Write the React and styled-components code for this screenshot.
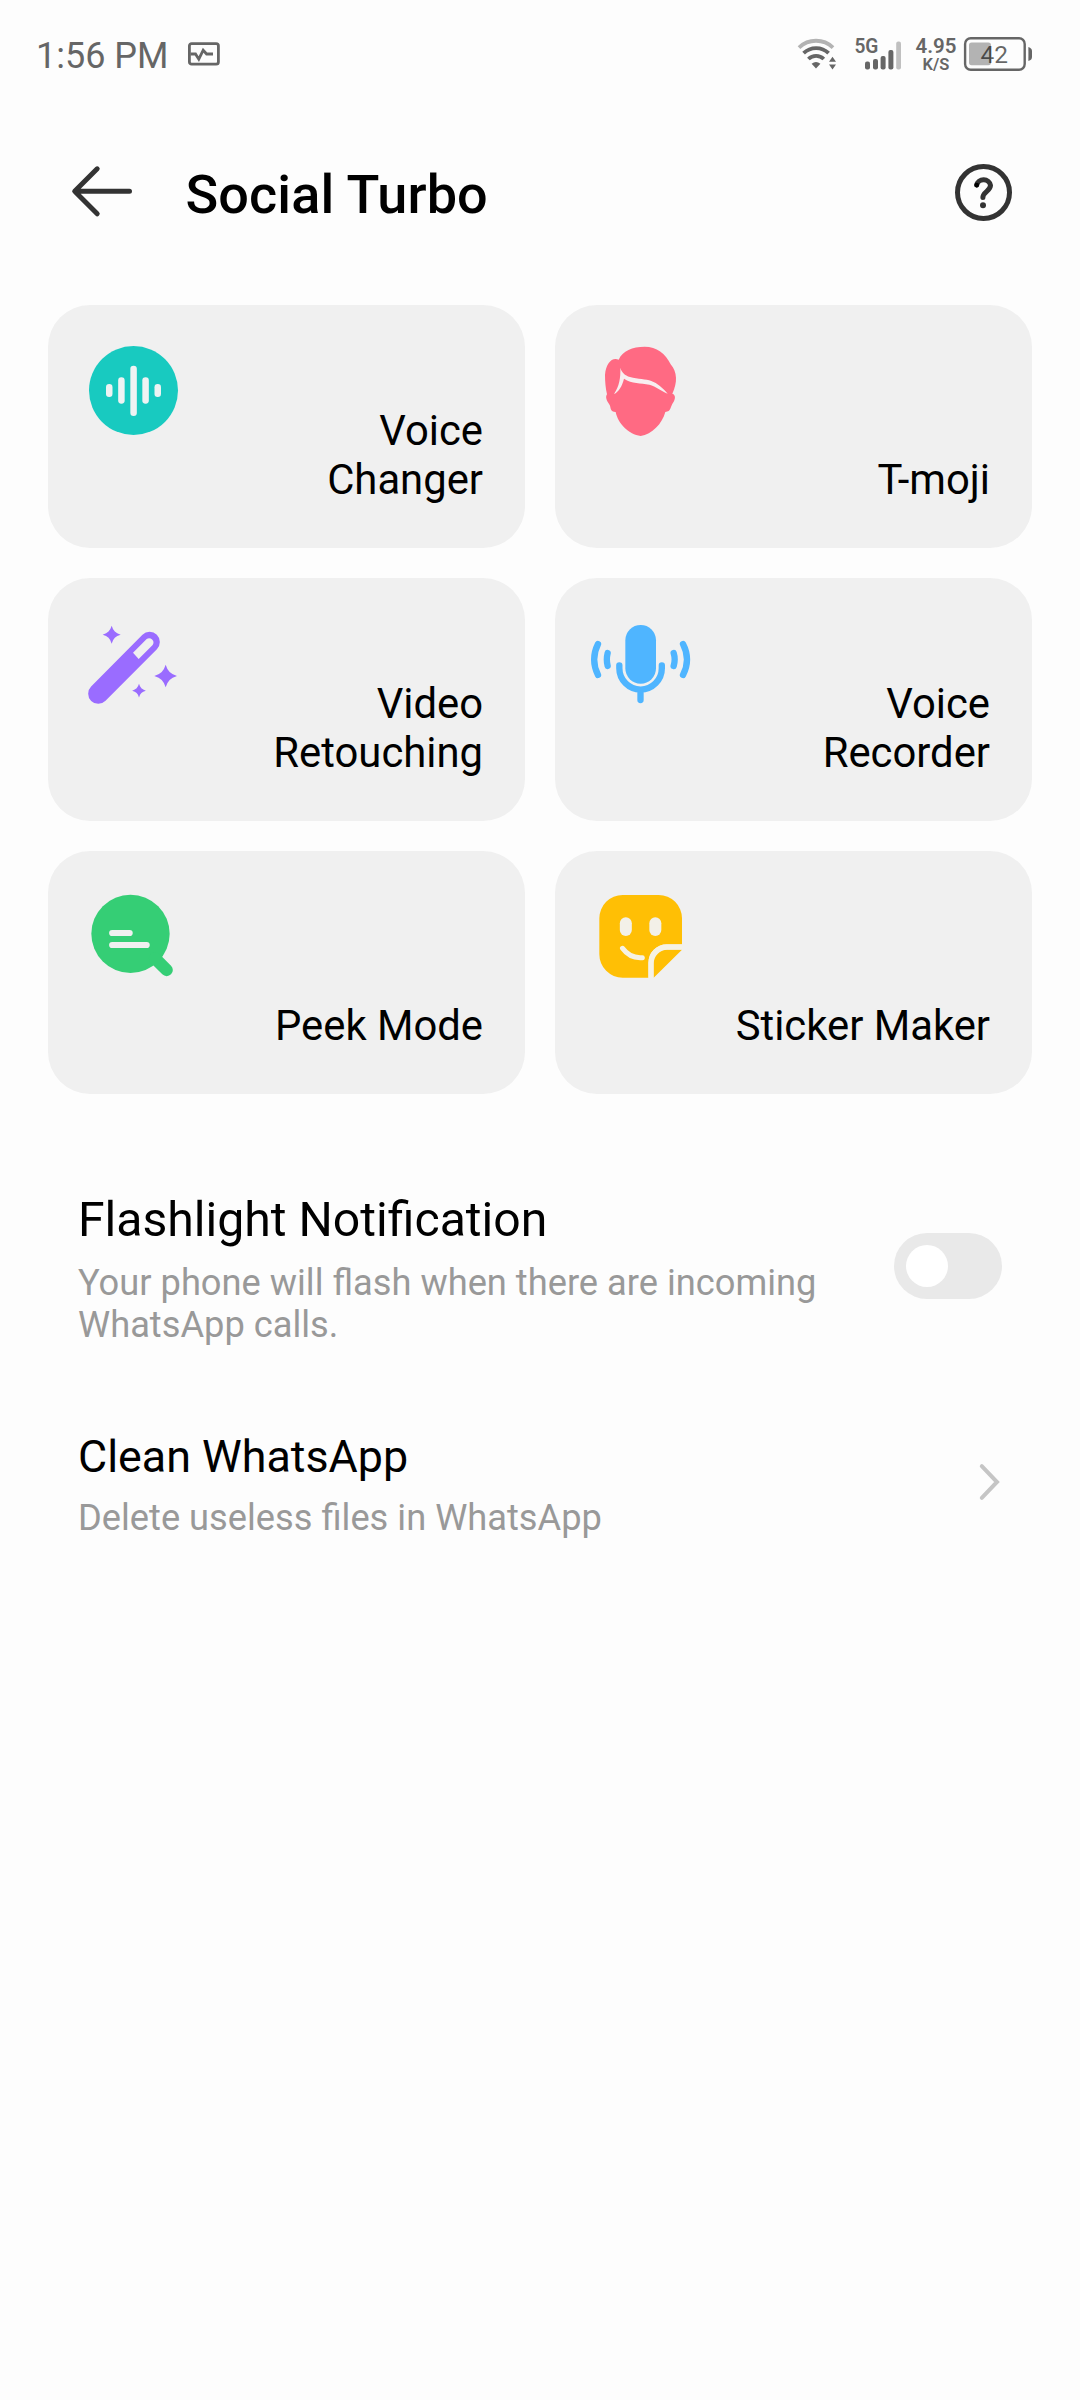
import React, { useState } from 'react';
import styled, { createGlobalStyle } from 'styled-components';

const GlobalStyle = createGlobalStyle`
  * {
    box-sizing: border-box;
  }
  body {
    margin: 0;
    background-color: #fdfdfd;
    font-family: Roboto, 'Noto Sans', sans-serif;
    color: #000;
  }
  button {
    padding: 0;
    border: 0;
    background: none;
    font: inherit;
    color: inherit;
  }
  svg {
    display: block;
    flex-shrink: 0;
  }
`;

const Screen = styled.div`
  width: 1080px;
  min-height: 2400px;
`;

const StatusBar = styled.div`
  display: flex;
  justify-content: space-between;
  height: 110px;
  padding: 34px 47px 0 36px;
  color: #666;
`;

const StatusGroup = styled.div`
  display: flex;
  align-items: flex-start;
`;

const Clock = styled.span`
  margin: 1px 18px 0 0;
  font-size: 36px;
  line-height: 42px;
`;

const MonitorSlot = styled.div`
  margin-top: 7px;
`;

const SignalSlot = styled.div`
  margin-left: 15px;
`;

const NetSpeed = styled.div`
  display: flex;
  flex-direction: column;
  align-items: center;
  width: 42px;
  margin: 2px 6px 0 12px;
  font-weight: 600;
`;

const SpeedValue = styled.span`
  font-size: 20.5px;
  line-height: 20px;
`;

const SpeedUnit = styled.span`
  font-size: 16.5px;
  line-height: 17px;
`;

const Header = styled.header`
  display: flex;
  align-items: center;
  height: 166px;
  padding: 0 66px 0 70px;
`;

const IconButton = styled.button`
  display: flex;
`;

const HelpButton = styled(IconButton)`
  margin-bottom: 2px;
`;

const Title = styled.h1`
  flex: 1;
  margin: 3px 0 0 47.5px;
  font-size: 54px;
  line-height: 64px;
  font-weight: 500;
  letter-spacing: 0.1px;
`;

const CardGrid = styled.div`
  display: grid;
  grid-template-columns: 477px 477px;
  grid-auto-rows: 243px;
  gap: 30px;
  padding: 29px 48px 0;
`;

const Card = styled.button`
  display: flex;
  justify-content: space-between;
  padding: 32px 42px 44px 32px;
  border-radius: 42px;
  background-color: #f0f0f0;
`;

const CardLabel = styled.span`
  align-self: flex-end;
  max-width: 256px;
  font-size: 41.8px;
  line-height: 49px;
  text-align: right;
`;

const SettingList = styled.div`
  display: flex;
  flex-direction: column;
  gap: 85px;
  padding: 98px 78px 0;
`;

const SettingRow = styled.div`
  display: flex;
  justify-content: space-between;
  align-items: flex-start;
`;

const SettingText = styled.div`
  max-width: 760px;
`;

const SettingTitle = styled.div`
  font-size: ${(props) => (props.$large ? '48.15px' : '44.8px')};
  line-height: ${(props) => (props.$large ? '56px' : '52px')};
`;

const SettingHint = styled.div`
  margin-top: 14px;
  font-size: 36.25px;
  line-height: 42px;
  color: #999;
`;

const Track = styled.button`
  display: flex;
  justify-content: ${(props) => (props.$on ? 'flex-end' : 'flex-start')};
  width: 108px;
  height: 66px;
  margin-top: 41px;
  padding: 12px;
  border-radius: 33px;
  background-color: ${(props) => (props.$on ? '#18cac0' : '#e9e9e9')};
`;

const Knob = styled.span`
  width: 42px;
  height: 42px;
  border-radius: 50%;
  background-color: #fff;
`;

const ChevronSlot = styled.div`
  margin-top: 32px;
`;

const MonitorIcon = () => (
  <svg width="34" height="26" viewBox="0 0 34 26" fill="none" stroke="#666" strokeWidth="2.8">
    <rect x="2.4" y="2.6" width="29" height="20.6" rx="2.2" />
    <path d="M3.5 13H8.5L11.8 18.2L16.2 9.2L19.6 13H26" strokeWidth="2.8" />
  </svg>
);

const WifiIcon = () => (
  <svg width="42" height="38" viewBox="16 14 42 38" fill="none" stroke="#666" strokeWidth="3.8">
    <path d="M19 27.6A24.5 24.5 0 0 1 53 27.6" stroke="#b3b3b3" />
    <path d="M23.6 33.2A18 18 0 0 1 48.6 33.2" />
    <path d="M28.4 39A11 11 0 0 1 43.8 39" />
    <path d="M31.6 43.8Q36 40 40.4 43.8L36 48.6Z" fill="#666" stroke="none" />
    <path d="M52.5 36.8L56 41.8H49ZM49 44.4H56L52.5 49.4Z" fill="#666" stroke="none" />
  </svg>
);

const SignalIcon = () => (
  <svg width="50" height="38" viewBox="73 14 50 38" fill="#666">
    <text x="74.4" y="33.4" fontSize="20" fontWeight="600" textLength="24" lengthAdjust="spacingAndGlyphs">
      5G
    </text>
    <rect x="85" y="41.6" width="5" height="8" rx="2" />
    <rect x="93" y="39" width="5" height="10.6" rx="2" />
    <rect x="100.6" y="36" width="5" height="13.6" rx="2" />
    <rect x="108.4" y="30" width="5" height="19.6" rx="2" />
    <rect x="116.2" y="21.4" width="4.8" height="28.2" rx="2" fill="#c0c0c0" />
  </svg>
);

const BatteryIcon = () => (
  <svg width="70" height="38" viewBox="183 14 70 38">
    <rect x="185.1" y="18.3" width="59.6" height="31.4" rx="5.6" fill="none" stroke="#666" strokeWidth="2.4" />
    <rect x="189" y="22.6" width="22" height="22.6" rx="2.6" fill="#b3b3b3" />
    <path d="M248.4 27C251 28 252 29 252 31V37C252 39 251 40 248.4 41Z" fill="#666" />
    <text x="200.4" y="42.8" fontSize="24.5" fill="rgba(0, 0, 0, 0.6)">
      42
    </text>
  </svg>
);

const BackIcon = () => (
  <svg width="68" height="56" viewBox="0 0 68 56" fill="none" stroke="#333" strokeWidth="5" strokeLinecap="round">
    <path d="M5 26.3H59.5M27.2 3.8L4.7 26.3L27.2 48.8" strokeLinejoin="round" />
  </svg>
);

const HelpIcon = () => (
  <svg width="61" height="61" viewBox="-30.5 -30.5 61 61" fill="none" stroke="#333" strokeLinecap="round">
    <circle r="26" strokeWidth="5" />
    <path d="M-6.8 -7.4A7 6.6 0 0 1 7 -7.2C7 -1.6 -0.6 -0.8 -0.6 5" strokeWidth="5" />
    <circle cx="-0.5" cy="12.7" r="3" fill="#333" stroke="none" />
    <circle cx="-6.8" cy="-7.4" r="2.4" fill="#000" stroke="none" />
  </svg>
);

const ChevronIcon = () => (
  <svg width="24" height="38" viewBox="0 0 24 38" fill="none" stroke="#c5c5c5" strokeWidth="4" strokeLinecap="round">
    <path d="M3.8 3.2L19 19L3.8 34.8" />
  </svg>
);

const VoiceChangerIcon = () => (
  <svg width="107" height="107" viewBox="120 126 321 321">
    <circle cx="280.5" cy="286.5" r="133.5" fill="#18cac0" />
    <g fill="#eef3f3">
      <rect x="198" y="267" width="19.5" height="39" rx="9.5" />
      <rect x="234.5" y="247" width="19.5" height="79" rx="9.5" />
      <rect x="271" y="212" width="19.5" height="151" rx="9.5" />
      <rect x="307" y="247" width="19.5" height="79" rx="9.5" />
      <rect x="343.5" y="267" width="19.5" height="39" rx="9.5" />
    </g>
  </svg>
);

const TmojiIcon = () => (
  <svg width="107" height="107" viewBox="111 126 321 321">
    <path
      d="M206 194C218 167 247 155 284 155C320 155 346 175 362 208C382 232 383 262 367 296C378 300 376 312 370 322
      C360 336 364 350 346 351C336 387 306 418 272 423C236 418 204 386 197 351C180 351 183 338 179 330
      C168 314 166 306 171 298C167 280 165 260 165 240C168 204 186 186 206 194Z"
      fill="#ff6a83"
    />
    <path
      d="M211 218C215 232 224 241 240 246C264 253 288 252 304 258C322 264 338 279 353 296C334 288 318 274 298 269
      C272 263 246 267 222 251C217 272 206 291 192 297C208 272 212 250 211 218Z"
      fill="#f8eef0"
    />
  </svg>
);

// four pointed sparkle with a radius of 1
const star =
  'M0 -1Q0.13 -0.57 0.35 -0.35Q0.57 -0.13 1 0Q0.57 0.13 0.35 0.35Q0.13 0.57 0 1Q-0.13 0.57 -0.35 0.35Q-0.57 0.13 -1 0Q-0.57 -0.13 -0.35 -0.35Q-0.13 -0.57 0 -1Z';

const RetouchIcon = () => (
  <svg width="107" height="107" viewBox="120 120 321 321" fill="#9a6cff">
    <path d="M175 371L329 216" stroke="#9a6cff" strokeWidth="61" strokeLinecap="round" />
    <path d="M279 248L320 207A13 13 0 0 1 338 225L296 267Z" fill="#f0f0f0" />
    <path d={star} transform="translate(215 194) scale(27)" />
    <path d={star} transform="translate(377 318) scale(34)" />
    <path d={star} transform="translate(297 362) scale(20.5)" />
  </svg>
);

const RecorderIcon = () => (
  <svg width="107" height="107" viewBox="111 120 321 321" fill="none" stroke="#4fb5ff" strokeWidth="19" strokeLinecap="round">
    <rect x="226" y="165" width="92" height="176" rx="46" fill="#4fb5ff" stroke="none" />
    <path d="M208 286V295A63.7 63.7 0 0 0 335.5 295V286M271.5 361V390" />
    <path d="M173 249Q168 268 173 288M144 222Q121 268 144 315" />
    <path d="M371 249Q377 268 371 288M399 222Q423 268 399 315" />
  </svg>
);

const PeekIcon = () => (
  <svg width="107" height="107" viewBox="120 129 321 321" fill="none" strokeLinecap="round">
    <circle cx="271.5" cy="281.5" r="117.5" fill="#35ce75" />
    <path d="M345 355L380 390" stroke="#35ce75" strokeWidth="37" />
    <path d="M216.5 279H269M216.5 315H320" stroke="#f0f0f0" strokeWidth="18.5" />
  </svg>
);

const StickerIcon = () => (
  <svg width="107" height="107" viewBox="111 129 321 321">
    <path
      d="M218 165H326A70 70 0 0 1 396 235V313H350A55 55 0 0 0 295 368V413H218A70 70 0 0 1 148 343V235A70 70 0 0 1 218 165Z"
      fill="#ffbf05"
    />
    <path d="M311 413V370A41 42 0 0 1 352 329H396Z" fill="#ffbf05" />
    <path d="M396 321H350A47 47 0 0 0 303 368V413" fill="none" stroke="#f6f2e4" strokeWidth="15" />
    <rect x="209.5" y="232" width="36" height="56" rx="18" fill="#f3f0e8" />
    <rect x="298" y="232" width="36" height="56" rx="18" fill="#f3f0e8" />
    <path d="M217.5 325Q240 356 277 353" fill="none" stroke="#f6f2e4" strokeWidth="15" strokeLinecap="round" />
  </svg>
);

const features = [
  { name: 'Voice Changer', icon: <VoiceChangerIcon /> },
  { name: 'T-moji', icon: <TmojiIcon /> },
  { name: 'Video Retouching', icon: <RetouchIcon /> },
  { name: 'Voice Recorder', icon: <RecorderIcon /> },
  { name: 'Peek Mode', icon: <PeekIcon /> },
  { name: 'Sticker Maker', icon: <StickerIcon /> },
];

export default function App() {
  const [flashOn, setFlashOn] = useState(false);

  return (
    <>
      <GlobalStyle />
      <Screen>
        <StatusBar>
          <StatusGroup>
            <Clock>1:56 PM</Clock>
            <MonitorSlot>
              <MonitorIcon />
            </MonitorSlot>
          </StatusGroup>
          <StatusGroup>
            <WifiIcon />
            <SignalSlot>
              <SignalIcon />
            </SignalSlot>
            <NetSpeed>
              <SpeedValue>4.95</SpeedValue>
              <SpeedUnit>K/S</SpeedUnit>
            </NetSpeed>
            <BatteryIcon />
          </StatusGroup>
        </StatusBar>
        <Header>
          <IconButton aria-label="Back">
            <BackIcon />
          </IconButton>
          <Title>Social Turbo</Title>
          <HelpButton aria-label="Help">
            <HelpIcon />
          </HelpButton>
        </Header>
        <CardGrid>
          {features.map((e) => {
            return (
              <Card key={e.name}>
                {e.icon}
                <CardLabel>{e.name}</CardLabel>
              </Card>
            );
          })}
        </CardGrid>
        <SettingList>
          <SettingRow>
            <SettingText>
              <SettingTitle $large>Flashlight Notification</SettingTitle>
              <SettingHint>Your phone will flash when there are incoming WhatsApp calls.</SettingHint>
            </SettingText>
            <Track $on={flashOn} role="switch" aria-checked={flashOn} onClick={() => setFlashOn(!flashOn)}>
              <Knob />
            </Track>
          </SettingRow>
          <SettingRow>
            <SettingText>
              <SettingTitle>Clean WhatsApp</SettingTitle>
              <SettingHint>Delete useless files in WhatsApp</SettingHint>
            </SettingText>
            <ChevronSlot>
              <ChevronIcon />
            </ChevronSlot>
          </SettingRow>
        </SettingList>
      </Screen>
    </>
  );
}
